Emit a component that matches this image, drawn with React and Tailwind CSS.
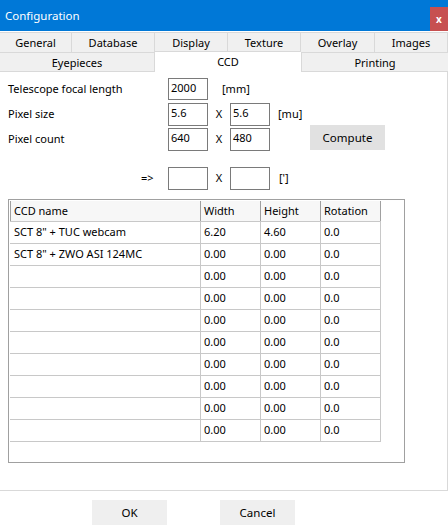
import React from "react";

const topTabs = [
  { label: "General", w: "w-[72px]" },
  { label: "Database", w: "w-[83px]" },
  { label: "Display", w: "w-[73px]" },
  { label: "Texture", w: "w-[73px]" },
  { label: "Overlay", w: "w-[74px]" },
  { label: "Images", w: "flex-1" },
];

const rows = [
  { name: 'SCT 8" + TUC webcam', width: "6.20", height: "4.60", rot: "0.0" },
  { name: 'SCT 8" + ZWO ASI 124MC', width: "0.00", height: "0.00", rot: "0.0" },
  ...Array.from({ length: 8 }, () => ({ name: "", width: "0.00", height: "0.00", rot: "0.0" })),
];

function Field({ value }) {
  return (
    <div className="w-[40px] h-full border border-[#7a7a7a] bg-white px-[2px] leading-[18px]">
      {value}
    </div>
  );
}

export default function App() {
  return (
    <div
      className="w-[448px] h-[532px] bg-white flex flex-col text-[11px] text-black overflow-hidden"
      style={{ fontFamily: '"Noto Sans", sans-serif' }}
    >
      {/* title bar */}
      <div className="h-[31px] bg-[#0078d7] flex items-start justify-between">
        <span className="text-white text-[11.5px] pl-[5px] pt-[7px]">Configuration</span>
        <div className="mt-[7px] w-[18px] h-[24px] bg-[#c75050] text-white font-bold text-[10px] flex items-center justify-center">
          x
        </div>
      </div>

      {/* tabs */}
      <div className="pt-[1px]">
        <div className="flex h-[20px]">
          {topTabs.map((t) => (
            <div
              key={t.label}
              className={`${t.w} bg-[#f0f0f0] border-t border-r border-[#d9d9d9] flex items-center justify-center leading-none`}
            >
              {t.label}
            </div>
          ))}
        </div>
        <div className="flex h-[20px]">
          <div className="w-[155px] bg-[#f0f0f0] border-t border-r border-b border-[#d9d9d9] flex items-center justify-center leading-none">
            Eyepieces
          </div>
          <div className="w-[146px] bg-white border-t border-[#d9d9d9] flex items-center justify-center leading-none -mt-[1px] pb-[2px]">
            CCD
          </div>
          <div className="flex-1 bg-[#f0f0f0] border-t border-l border-b border-[#d9d9d9] flex items-center justify-center leading-none">
            Printing
          </div>
        </div>
      </div>

      {/* page */}
      <div className="h-[419px] border-r border-b border-[#d9d9d9] bg-white pt-[6px]">
        <div className="flex items-center h-[22px]">
          <span className="w-[168px] pl-[8px]">Telescope focal length</span>
          <Field value="2000" />
          <span className="ml-[14px]">[mm]</span>
        </div>
        <div className="flex items-center h-[23px] mt-[3px]">
          <span className="w-[168px] pl-[8px]">Pixel size</span>
          <Field value="5.6" />
          <span className="w-[22px] text-center">X</span>
          <Field value="5.6" />
          <span className="ml-[8px]">[mu]</span>
        </div>
        <div className="flex items-center h-[23px] mt-[2px]">
          <span className="w-[168px] pl-[8px]">Pixel count</span>
          <Field value="640" />
          <span className="w-[22px] text-center">X</span>
          <Field value="480" />
          <div className="ml-[40px] -mt-[4px] w-[75px] h-[25px] bg-[#e1e1e1] flex items-center justify-center text-[11.5px]">
            Compute
          </div>
        </div>
        <div className="flex items-center h-[23px] mt-[16px]">
          <span className="w-[168px] pl-[141px]">=&gt;</span>
          <Field value="" />
          <span className="w-[22px] text-center">X</span>
          <Field value="" />
          <span className="ml-[9px]">[']</span>
        </div>

        {/* table */}
        <div className="ml-[8px] mt-[9px] w-[397px] h-[264px] border border-[#a0a0a0] p-[1px]">
          <div className="flex h-[21px] w-[371px] bg-[#f7f7f7] border-b border-[#c8c8c8]">
            <div className="w-[191px] border-l border-r border-[#a0a0a0] pl-[3px] flex items-center">CCD name</div>
            <div className="w-[60px] border-r border-[#a0a0a0] pl-[3px] flex items-center">Width</div>
            <div className="w-[60px] border-r border-[#a0a0a0] pl-[3px] flex items-center">Height</div>
            <div className="w-[60px] border-r border-[#a0a0a0] pl-[3px] flex items-center">Rotation</div>
          </div>
          {rows.map((r, i) => (
            <div key={i} className="flex h-[22px] w-[371px] border-b border-[#c8c8c8]">
              <div className="w-[191px] border-r border-[#c8c8c8] pl-[4px] flex items-center">{r.name}</div>
              <div className="w-[60px] border-r border-[#c8c8c8] pl-[3px] flex items-center">{r.width}</div>
              <div className="w-[60px] border-r border-[#c8c8c8] pl-[3px] flex items-center">{r.height}</div>
              <div className="w-[60px] border-r border-[#c8c8c8] pl-[3px] flex items-center">{r.rot}</div>
            </div>
          ))}
        </div>
      </div>

      {/* buttons */}
      <div className="flex mt-[9px] pl-[92px] gap-[53px]">
        <div className="w-[75px] h-[25px] bg-[#efefef] flex items-center justify-center text-[11.5px]">OK</div>
        <div className="w-[75px] h-[25px] bg-[#efefef] flex items-center justify-center text-[11.5px]">Cancel</div>
      </div>
    </div>
  );
}
